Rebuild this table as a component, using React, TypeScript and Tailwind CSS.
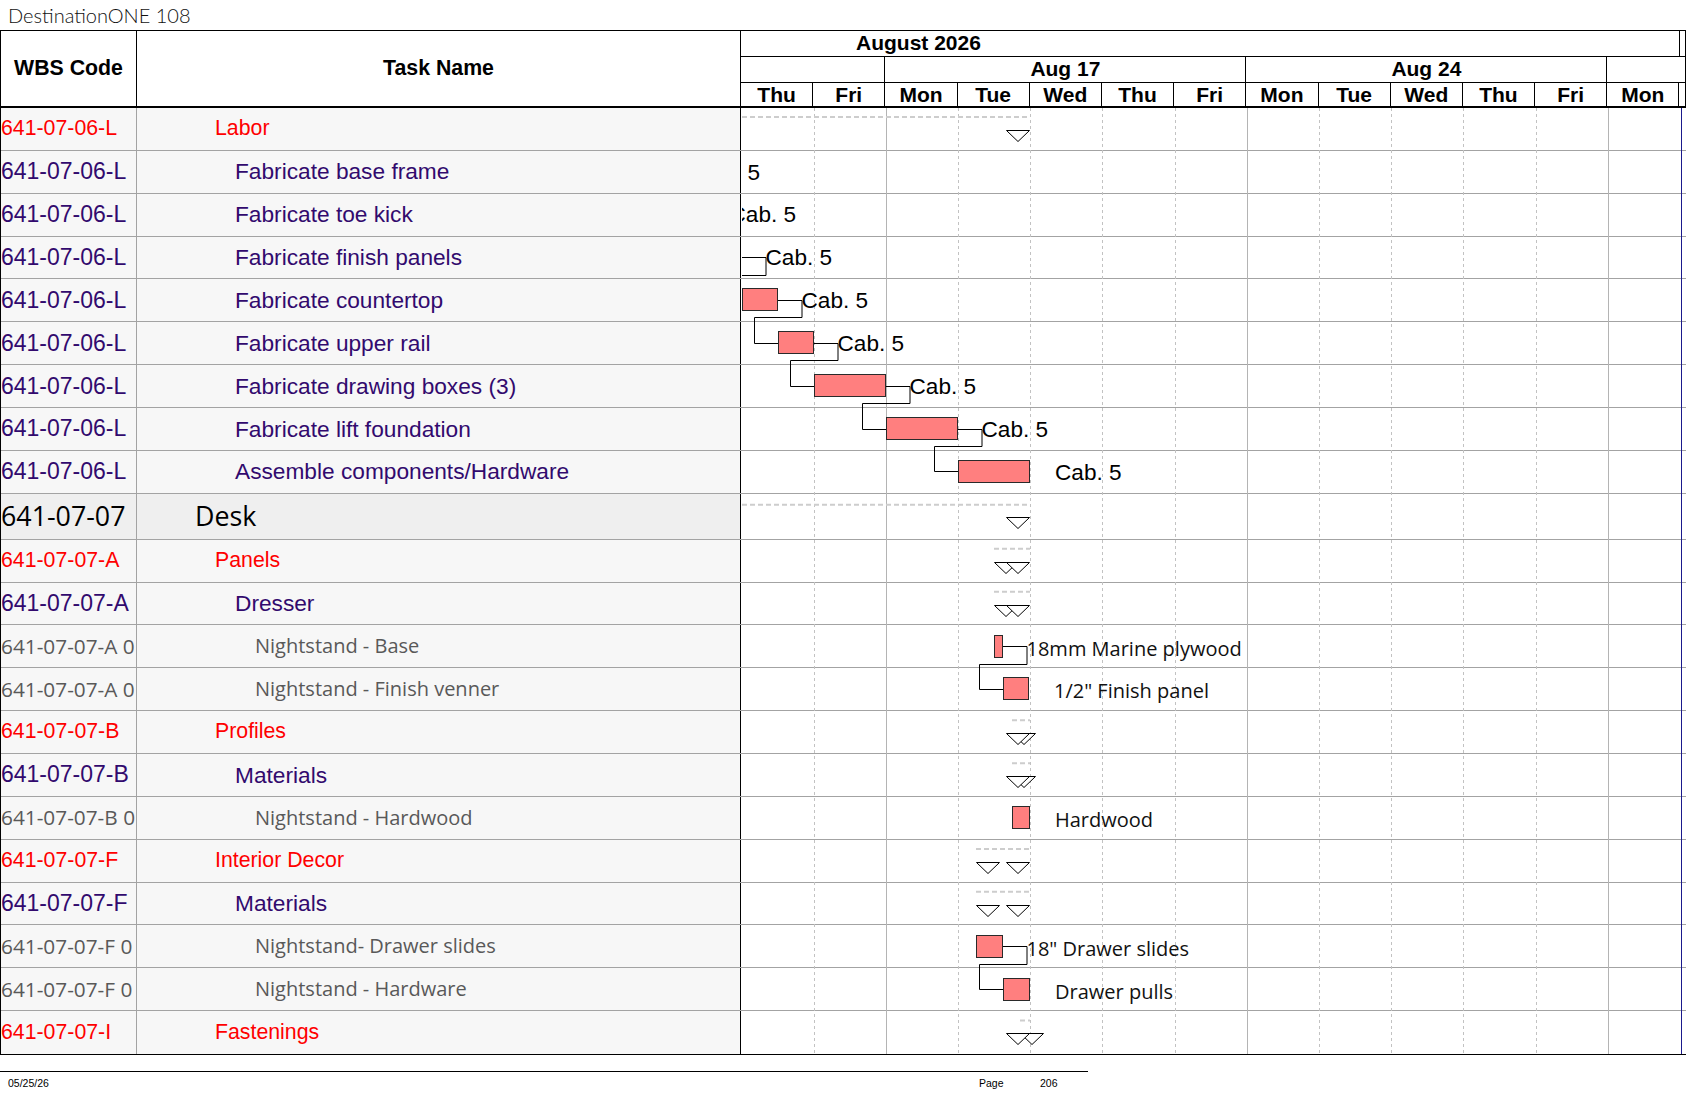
import React from "react";

type Kind = "group" | "task" | "item" | "section";

type Row = { wbs: string; name: string; kind: Kind };

const rows: Row[] = [
  { wbs: "641-07-06-L", name: "Labor", kind: "group" },
  { wbs: "641-07-06-L", name: "Fabricate base frame", kind: "task" },
  { wbs: "641-07-06-L", name: "Fabricate toe kick", kind: "task" },
  { wbs: "641-07-06-L", name: "Fabricate finish panels", kind: "task" },
  { wbs: "641-07-06-L", name: "Fabricate countertop", kind: "task" },
  { wbs: "641-07-06-L", name: "Fabricate upper rail", kind: "task" },
  { wbs: "641-07-06-L", name: "Fabricate drawing boxes (3)", kind: "task" },
  { wbs: "641-07-06-L", name: "Fabricate lift foundation", kind: "task" },
  { wbs: "641-07-06-L", name: "Assemble components/Hardware", kind: "task" },
  { wbs: "641-07-07", name: "Desk", kind: "section" },
  { wbs: "641-07-07-A", name: "Panels", kind: "group" },
  { wbs: "641-07-07-A", name: "Dresser", kind: "task" },
  { wbs: "641-07-07-A 0", name: "Nightstand - Base", kind: "item" },
  { wbs: "641-07-07-A 0", name: "Nightstand - Finish venner", kind: "item" },
  { wbs: "641-07-07-B", name: "Profiles", kind: "group" },
  { wbs: "641-07-07-B", name: "Materials", kind: "task" },
  { wbs: "641-07-07-B 0", name: "Nightstand - Hardwood", kind: "item" },
  { wbs: "641-07-07-F", name: "Interior Decor", kind: "group" },
  { wbs: "641-07-07-F", name: "Materials", kind: "task" },
  { wbs: "641-07-07-F 0", name: "Nightstand- Drawer slides", kind: "item" },
  { wbs: "641-07-07-F 0", name: "Nightstand - Hardware", kind: "item" },
  { wbs: "641-07-07-I", name: "Fastenings", kind: "group" },
];

// task-name column fonts
const kindText: Record<Kind, string> = {
  group: "text-[#ff0000] font-['Liberation_Sans',Arial,sans-serif] text-[21.3px]",
  task: "text-[#320a6e] font-['Liberation_Sans',Arial,sans-serif] text-[22.7px]",
  item: "text-[#595959] font-['Open_Sans',sans-serif] text-[20px]",
  section: "text-black font-['Open_Sans',sans-serif] text-[26.8px]",
};

// WBS column fonts (the grey codes run a touch larger than their task names)
const wbsText: Record<Kind, string> = {
  group: "text-[#ff0000] font-['Liberation_Sans',Arial,sans-serif] text-[21.3px]",
  task: "text-[#320a6e] font-['Liberation_Sans',Arial,sans-serif] text-[23px]",
  item: "text-[#595959] font-['Open_Sans',sans-serif] text-[20.8px]",
  section: "text-black font-['Open_Sans',sans-serif] text-[26.8px]",
};

const kindIndent: Record<Kind, string> = {
  group: "pl-[78px]",
  task: "pl-[98px]",
  item: "pl-[118px]",
  section: "pl-[58px]",
};

const ROW_H = 42.87;
const DESK_H = 46;
const COL = 72.2;
const BODY_H = 21 * ROW_H + DESK_H;

function rowTop(i: number): number {
  return i <= 9 ? i * ROW_H : 9 * ROW_H + DESK_H + (i - 10) * ROW_H;
}

const days = ["Thu", "Fri", "Mon", "Tue", "Wed", "Thu", "Fri", "Mon", "Tue", "Wed", "Thu", "Fri", "Mon"];

type Bar = { row: number; s: number; e: number; label: string; next?: boolean };

const bars: Bar[] = [
  { row: 1, s: -108, e: -72, label: "Cab. 5", next: true },
  { row: 2, s: -72, e: -36, label: "Cab. 5", next: true },
  { row: 3, s: -36, e: 0, label: "Cab. 5", next: true },
  { row: 4, s: 0, e: 36, label: "Cab. 5", next: true },
  { row: 5, s: 36, e: 72, label: "Cab. 5", next: true },
  { row: 6, s: 72, e: 144, label: "Cab. 5", next: true },
  { row: 7, s: 144, e: 216, label: "Cab. 5", next: true },
  { row: 8, s: 216, e: 288, label: "Cab. 5" },
  { row: 12, s: 252, e: 261, label: "18mm Marine plywood", next: true },
  { row: 13, s: 261, e: 287, label: "1/2\" Finish panel" },
  { row: 16, s: 270, e: 288, label: "Hardwood" },
  { row: 19, s: 234, e: 261, label: "18\" Drawer slides", next: true },
  { row: 20, s: 261, e: 288, label: "Drawer pulls" },
];

type Summary = { row: number; s: number; e: number; open?: boolean };

const summaries: Summary[] = [
  { row: 0, s: -200, e: 288, open: true },
  { row: 9, s: -200, e: 288, open: true },
  { row: 10, s: 252, e: 288 },
  { row: 11, s: 252, e: 288 },
  { row: 14, s: 270, e: 288 },
  { row: 15, s: 270, e: 288 },
  { row: 17, s: 234, e: 288 },
  { row: 18, s: 234, e: 288 },
  { row: 21, s: 278, e: 288 },
];

const px = (v: number) => Math.round(v) + 0.5;

function Triangle({ x, y }: { x: number; y: number }) {
  return (
    <polygon
      points={`${x + 0.5},${px(y)} ${x + 23.5},${px(y)} ${x + 12},${px(y + 11)}`}
      fill="white"
      stroke="black"
      strokeWidth={1}
    />
  );
}

function GanttChart() {
  const gridLines = Array.from({ length: 12 }, (_, i) => i + 1);
  return (
    <svg className="pointer-events-none absolute left-[741px] top-0" width={944} height={BODY_H}>
      {gridLines.map((k) => {
        const x = px(k * COL - 0.6);
        const monday = k === 2 || k === 7 || k === 12;
        return (
          <line
            key={k}
            x1={x}
            x2={x}
            y1={0}
            y2={BODY_H}
            stroke={monday ? "#b4b4b4" : "#c2c2c2"}
            strokeDasharray={monday ? undefined : "3 3"}
          />
        );
      })}
      <line x1={939.5} x2={939.5} y1={0} y2={BODY_H} stroke="#1a1a8c" />

      {summaries.map((sm) => {
        const top = rowTop(sm.row);
        const dy = sm.row === 9 ? 11 : 9;
        const ty = top + (sm.row === 9 ? 23 : 22);
        return (
          <g key={sm.row}>
            <line
              x1={Math.max(sm.s, 0)}
              x2={sm.e}
              y1={top + dy}
              y2={top + dy}
              stroke="#cdcdcd"
              strokeWidth={2}
              strokeDasharray="5 3"
            />
            {!sm.open ? <Triangle x={sm.s} y={ty} /> : null}
            <Triangle x={sm.e - 24} y={ty} />
          </g>
        );
      })}

      {bars.map((b, idx) => {
        const top = rowTop(b.row);
        const mid = px(top + 20.5);
        const upper = b.row < 9;
        const labelX = b.next ? b.e + 23.5 : b.e + 25;
        const nb = b.next ? bars[idx + 1] : undefined;
        const link = nb
          ? `M${b.e},${mid} H${b.e + 24} V${px(top + 38)} H${nb.s - 23.5} V${px(rowTop(nb.row) + 20.5)} H${nb.s}`
          : null;
        return (
          <g key={b.row}>
            {link ? <path d={link} fill="none" stroke="black" strokeWidth={1} /> : null}
            <rect
              x={b.s + 0.5}
              y={px(top + 9)}
              width={b.e - b.s - 1}
              height={22}
              fill="#ff7f7f"
              stroke="#2a2a2a"
              strokeWidth={1}
            />
            {upper ? (
              <text
                x={labelX}
                y={top + 28.7}
                fill="black"
                className="font-['Liberation_Sans',Arial,sans-serif] text-[22.6px]"
              >
                {b.label}
              </text>
            ) : (
              <text x={labelX} y={top + 30} fill="#111111" className="font-['Open_Sans',sans-serif] text-[20px]">
                {b.label}
              </text>
            )}
          </g>
        );
      })}
    </svg>
  );
}

function GanttHeader() {
  return (
    <div className="flex flex-1 flex-col font-['Liberation_Sans',Arial,sans-serif] text-[21px] font-bold leading-none">
      <div className="flex h-[26px] border-b border-black">
        <div className="flex w-[939px] items-center border-r border-black pb-[2px] pl-[115px]">August 2026</div>
        <div className="flex-1 border-r border-black" />
      </div>
      <div className="flex h-[26px] border-b border-black">
        <div className="w-[144.4px] border-r border-black" />
        <div className="flex w-[361px] items-center justify-center border-r border-black pb-[2px]">Aug 17</div>
        <div className="flex w-[361px] items-center justify-center border-r border-black pb-[2px]">Aug 24</div>
        <div className="flex-1 border-r border-black" />
      </div>
      <div className="flex h-[25px] border-b-2 border-black">
        {days.map((d, i) => (
          <div key={i} className="flex w-[72.2px] items-center justify-center border-r border-black pb-[1px]">
            {d}
          </div>
        ))}
        <div className="flex-1 border-r border-black" />
      </div>
    </div>
  );
}

function TableHeader() {
  return (
    <div className="flex h-[77px]">
      <div className="flex w-[136px] items-center justify-center border-r border-b-2 border-black pt-[1px] font-['Liberation_Sans',Arial,sans-serif] text-[21.3px] font-bold">
        WBS Code
      </div>
      <div className="flex w-[604px] items-center justify-center border-r border-b-2 border-black pt-[1px] font-['Liberation_Sans',Arial,sans-serif] text-[21.3px] font-bold">
        Task Name
      </div>
      <GanttHeader />
    </div>
  );
}

function TableRow({ row, last }: { row: Row; last: boolean }) {
  const height = row.kind === "section" ? "h-[46px]" : "h-[42.87px]";
  const bg = row.kind === "section" ? "bg-[#efefef]" : "bg-[#f7f7f7]";
  return (
    <div className={`flex ${height} ${last ? "" : "border-b border-[#a3a3a3]"}`}>
      <div
        className={`flex w-[136px] items-center overflow-hidden whitespace-nowrap border-r border-[#a3a3a3] leading-none ${bg} ${wbsText[row.kind]}`}
      >
        {row.wbs}
      </div>
      <div
        className={`flex w-[604px] items-center overflow-hidden whitespace-nowrap border-r border-black leading-none ${bg} ${kindIndent[row.kind]} ${kindText[row.kind]}`}
      >
        {row.name}
      </div>
      <div className="flex-1" />
    </div>
  );
}

export default function App() {
  return (
    <div className="relative h-[1097px] w-[1687px] overflow-hidden bg-white text-black">
      <div className="flex h-[30px] items-center pl-[8px] font-['Lato',sans-serif] text-[20px] font-light leading-none text-[#111111]">
        DestinationONE 108
      </div>
      <div className="w-[1686px] border-t border-l border-black">
        <TableHeader />
        <div className="relative border-b border-black">
          {rows.map((row, i) => (
            <TableRow key={i} row={row} last={i === rows.length - 1} />
          ))}
          <GanttChart />
        </div>
      </div>
      <div className="mt-[16px] flex h-[24px] w-[1088px] items-center border-t border-black font-['Liberation_Sans',Arial,sans-serif] text-[10.5px] leading-none">
        <span className="w-[979px] pl-[8px]">05/25/26</span>
        <span className="w-[61px]">Page</span>
        <span>206</span>
      </div>
    </div>
  );
}
